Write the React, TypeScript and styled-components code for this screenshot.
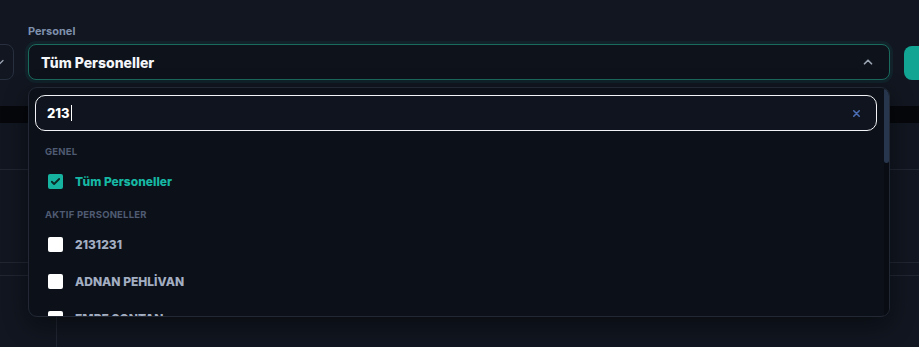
import React from "react";
import styled, { createGlobalStyle } from "styled-components";

const Global = createGlobalStyle`
  html, body { margin: 0; padding: 0; background: #111620; }
  body { font-family: Inter, "Noto Sans", sans-serif; overflow: hidden; width: 919px; height: 347px; }
  * { box-sizing: border-box; }
`;

const Page = styled.div`
  position: relative;
  width: 919px;
  height: 347px;
  overflow: hidden;
  background: #111620;
`;

const FilterBar = styled.div`
  display: flex;
  align-items: flex-end;
  gap: 14px;
  margin-left: -30px;
  padding-top: 24px;
`;

const GhostButton = styled.button`
  width: 44px;
  height: 36px;
  flex: none;
  border: 1px solid #283040;
  border-radius: 8px;
  background: #111620;
  color: #9aa3b2;
  display: flex;
  align-items: center;
  justify-content: flex-end;
  padding: 0 7px 0 0;
`;

const Field = styled.div`
  position: relative;
  width: 862px;
  flex: none;
  display: flex;
  flex-direction: column;
  gap: 6px;
`;

const Label = styled.label`
  font-size: 11px;
  font-weight: 700;
  line-height: 14px;
  color: #7f90ad;
`;

const Trigger = styled.div`
  height: 36px;
  border: 1px solid #1b6a5e;
  border-radius: 8px;
  background: #0e131b;
  box-shadow: 0 0 0 3px rgba(20, 184, 166, 0.08);
  display: flex;
  align-items: center;
  justify-content: space-between;
  padding: 0 14px 0 12px;
  color: #f3f5f8;
  font-size: 14px;
  font-weight: 800;
`;

const TealButton = styled.button`
  width: 60px;
  height: 34px;
  flex: none;
  border: none;
  border-radius: 8px;
  background: #12a594;
`;

const Dropdown = styled.div`
  position: absolute;
  left: 0;
  top: 63px;
  width: 862px;
  height: 230px;
  border: 1px solid #222935;
  border-radius: 9px;
  background: #0c1018;
  overflow: hidden;
  z-index: 10;
  display: flex;
  box-shadow: 0 8px 24px rgba(0, 0, 0, 0.45);
`;

const List = styled.div`
  flex: 1;
  min-width: 0;
  overflow: hidden;
`;

const ScrollTrack = styled.div`
  width: 5px;
  flex: none;
  background: #090c12;
  display: flex;
  flex-direction: column;
`;

const ScrollThumb = styled.div`
  height: 75px;
  background: #27364c;
  border-radius: 3px;
`;

const SearchWrap = styled.div`
  padding: 7px 7px 6px 6px;
`;

const SearchBox = styled.div`
  height: 36px;
  border: 1.5px solid #f1f3f6;
  border-radius: 10px;
  background: #0f141e;
  display: flex;
  align-items: center;
  justify-content: space-between;
  padding: 0 14px 0 11px;
`;

const SearchText = styled.span`
  color: #ffffff;
  font-size: 13px;
  font-weight: 800;
  display: flex;
  align-items: center;
`;

const Caret = styled.span`
  display: inline-block;
  width: 1px;
  height: 16px;
  background: #ffffff;
  margin-left: 1px;
`;

const ClearIcon = styled.span`
  display: flex;
  align-items: center;
`;

const GroupHeader = styled.div`
  padding: 8px 16px 4px;
  font-size: 9.5px;
  font-weight: 700;
  line-height: 14px;
  letter-spacing: 0.2px;
  color: #4f5b72;
  text-transform: uppercase;
`;

const Option = styled.div<{ $checked?: boolean }>`
  height: 37px;
  display: flex;
  align-items: center;
  gap: 12px;
  padding-left: 19px;
  font-size: 12px;
  font-weight: 800;
  white-space: nowrap;
  color: ${(p) => (p.$checked ? "#16b8a4" : "#a3aec2")};
`;

const Box = styled.span<{ $checked?: boolean }>`
  width: 15px;
  height: 15px;
  flex: none;
  border-radius: 2px;
  background: ${(p) => (p.$checked ? "#17b3a1" : "#ffffff")};
  display: flex;
  align-items: center;
  justify-content: center;
`;

const Table = styled.div`
  margin-top: 26px;
  display: flex;
  flex-direction: column;
`;

const HeadBar = styled.div`
  height: 17px;
  background: #05070b;
`;

const Row = styled.div<{ $h: number }>`
  height: ${(p) => p.$h}px;
  border-bottom: 1px solid #202632;
`;

const LastRow = styled.div`
  display: grid;
  grid-template-columns: 57px 1fr;
  height: 80px;
`;

const Cell = styled.div`
  border-right: 1px solid #202632;
`;

const general = ["Tüm Personeller"];
const active = ["2131231", "ADNAN PEHLİVAN", "EMRE SONTAN"];

const Check = () => (
  <svg width="11" height="11" viewBox="0 0 24 24" fill="none" stroke="#0b2a27" strokeWidth="4" strokeLinecap="round" strokeLinejoin="round">
    <path d="M4 12.5l5 5L20 6.5" />
  </svg>
);

export default function App() {
  return (
    <Page>
      <Global />
      <FilterBar>
        <GhostButton>
          <svg width="12" height="12" viewBox="0 0 24 24" fill="none" stroke="#9aa3b2" strokeWidth="2.5" strokeLinecap="round" strokeLinejoin="round">
            <path d="M6 9l6 6 6-6" />
          </svg>
        </GhostButton>
        <Field>
          <Label>Personel</Label>
          <Trigger>
            <span>Tüm Personeller</span>
            <svg width="14" height="14" viewBox="0 0 24 24" fill="none" stroke="#9aa3b2" strokeWidth="3" strokeLinecap="round" strokeLinejoin="round">
              <path d="M6 15l6-6 6 6" />
            </svg>
          </Trigger>
          <Dropdown>
            <List>
              <SearchWrap>
                <SearchBox>
                  <SearchText>
                    213
                    <Caret />
                  </SearchText>
                  <ClearIcon>
                    <svg width="11" height="11" viewBox="0 0 24 24" fill="none" stroke="#4a6db3" strokeWidth="3.5" strokeLinecap="round">
                      <path d="M6 6l12 12M18 6L6 18" />
                    </svg>
                  </ClearIcon>
                </SearchBox>
              </SearchWrap>
              <GroupHeader>Genel</GroupHeader>
              {general.map((n) => (
                <Option key={n} $checked>
                  <Box $checked>
                    <Check />
                  </Box>
                  {n}
                </Option>
              ))}
              <GroupHeader>Aktif Personeller</GroupHeader>
              {active.map((n) => (
                <Option key={n}>
                  <Box />
                  {n}
                </Option>
              ))}
            </List>
            <ScrollTrack>
              <ScrollThumb />
            </ScrollTrack>
          </Dropdown>
        </Field>
        <TealButton />
      </FilterBar>
      <Table>
        <HeadBar />
        <Row $h={47} />
        <Row $h={93} />
        <Row $h={13} />
        <LastRow>
          <Cell />
          <div />
        </LastRow>
      </Table>
    </Page>
  );
}
